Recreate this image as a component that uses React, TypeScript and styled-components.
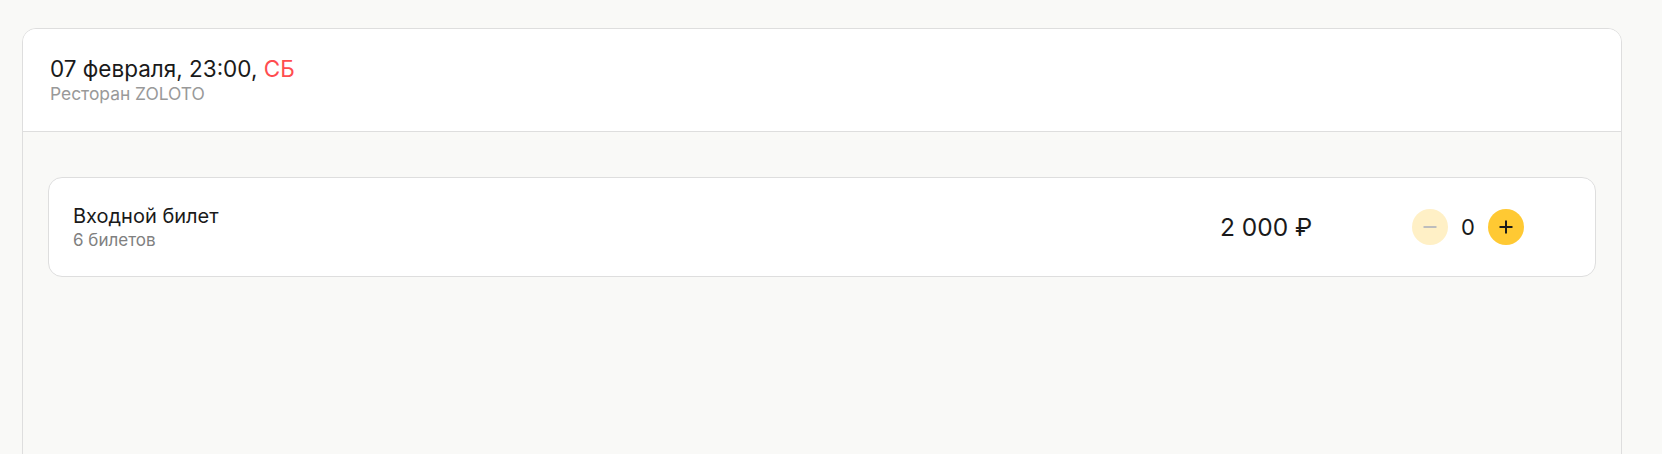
import React, { useState } from "react";
import styled, { createGlobalStyle } from "styled-components";

const Global = createGlobalStyle`
  html, body { margin: 0; padding: 0; background: #f9f9f7; }
  body { font-family: Inter, "Noto Sans", sans-serif; color: #1c1c1c; }
  * { box-sizing: border-box; }
`;

const Page = styled.div`
  padding: 28px 40px 0 22px;
  height: 454px;
  overflow: hidden;
`;

const Card = styled.section`
  background: #f9f9f7;
  border: 1px solid #dedede;
  border-radius: 14px;
  min-height: 460px;
  overflow: hidden;
`;

const Header = styled.header`
  background: #ffffff;
  border-bottom: 1px solid #dedede;
  padding: 25px 26px 0 27px;
  height: 103px;
`;

const Title = styled.div`
  font-size: 22.5px;
  line-height: 29px;
  color: #1a1a1a;
`;

const Weekday = styled.span`
  color: #ff4d4f;
`;

const Subtitle = styled.div`
  font-size: 17.4px;
  line-height: 22px;
  color: #999999;
`;

const Body = styled.div`
  padding: 45px 25px;
`;

const Ticket = styled.div`
  display: grid;
  grid-template-columns: 1fr 192px 112px;
  align-items: center;
  height: 100px;
  background: #ffffff;
  border: 1px solid #dedede;
  border-radius: 14px;
  padding: 0 71px 0 24px;
`;

const Info = styled.div`
  display: flex;
  flex-direction: column;
  gap: 2px;
`;

const Name = styled.div`
  font-size: 20px;
  line-height: 24px;
  color: #1a1a1a;
`;

const Count = styled.div`
  font-size: 17px;
  line-height: 20px;
  color: #808080;
`;

const Price = styled.div`
  font-size: 24.5px;
  line-height: 28px;
  color: #1a1a1a;
`;

const Stepper = styled.div`
  display: grid;
  grid-template-columns: 36px 40px 36px;
  align-items: center;
`;

const RoundButton = styled.button<{ $active?: boolean }>`
  width: 36px;
  height: 36px;
  border-radius: 50%;
  border: none;
  padding: 0;
  display: flex;
  align-items: center;
  justify-content: center;
  background: ${(p) => (p.$active ? "#ffc933" : "#fff0c6")};
  color: ${(p) => (p.$active ? "#1a1a1a" : "#bdbdbd")};
  cursor: ${(p) => (p.$active ? "pointer" : "default")};
`;

const Qty = styled.div`
  text-align: center;
  font-size: 22px;
  line-height: 28px;
  color: #1a1a1a;
`;

const MinusIcon = () => (
  <svg width="16" height="16" viewBox="0 0 16 16">
    <path d="M1.5 8h13" stroke="currentColor" strokeWidth="2" />
  </svg>
);

const PlusIcon = () => (
  <svg width="16" height="16" viewBox="0 0 16 16">
    <path d="M1.5 8h13M8 1.5v13" stroke="currentColor" strokeWidth="2" />
  </svg>
);

export default function App() {
  const [qty, setQty] = useState(0);
  return (
    <>
      <Global />
      <Page>
        <Card>
          <Header>
            <Title>
              07 февраля, 23:00, <Weekday>СБ</Weekday>
            </Title>
            <Subtitle>Ресторан ZOLOTO</Subtitle>
          </Header>
          <Body>
            <Ticket>
              <Info>
                <Name>Входной билет</Name>
                <Count>6 билетов</Count>
              </Info>
              <Price>2 000 ₽</Price>
              <Stepper>
                <RoundButton onClick={() => setQty((q) => Math.max(0, q - 1))} $active={qty > 0}>
                  <MinusIcon />
                </RoundButton>
                <Qty>{qty}</Qty>
                <RoundButton $active onClick={() => setQty((q) => Math.min(6, q + 1))}>
                  <PlusIcon />
                </RoundButton>
              </Stepper>
            </Ticket>
          </Body>
        </Card>
      </Page>
    </>
  );
}
